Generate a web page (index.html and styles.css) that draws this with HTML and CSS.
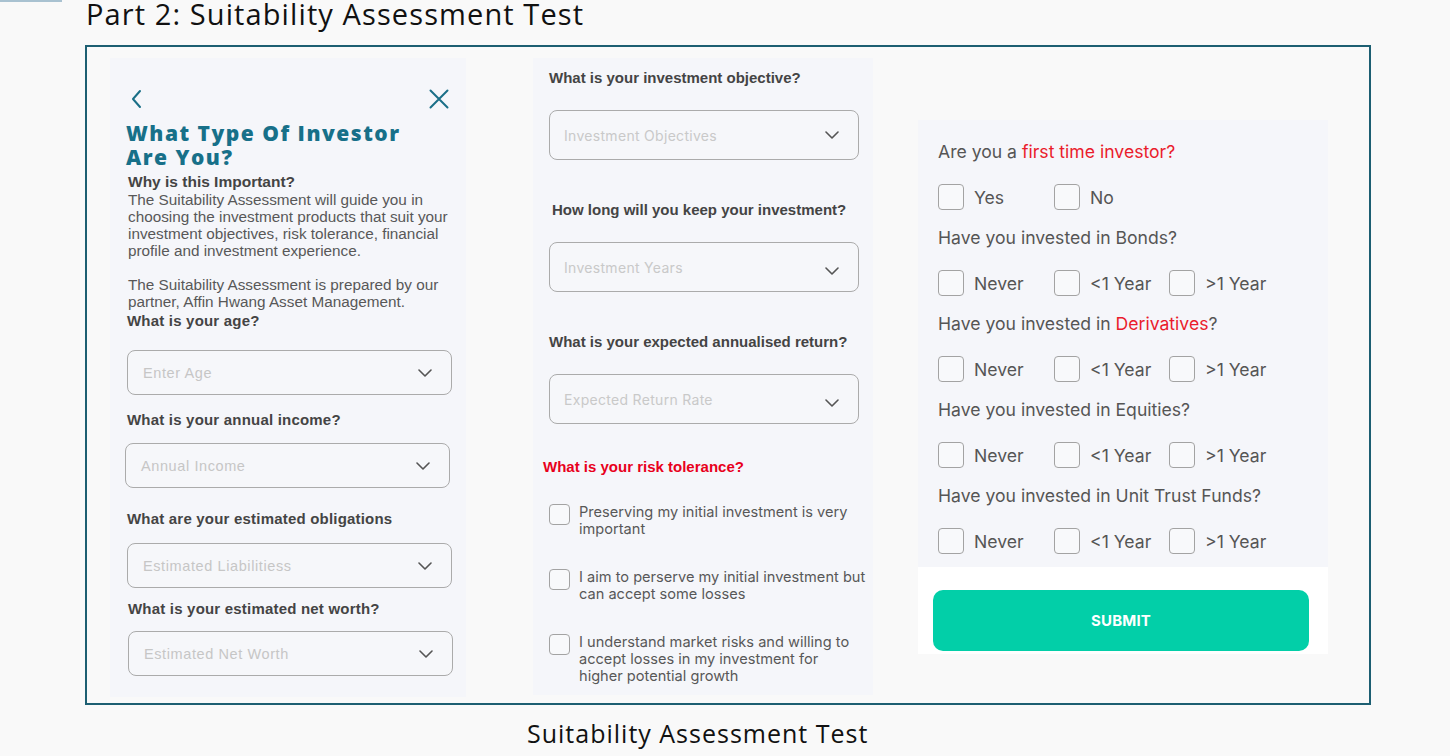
FILE: index.html
```html
<!DOCTYPE html>
<html lang="en">
<head>
<meta charset="utf-8">
<title>Part 2: Suitability Assessment Test</title>
<link rel="stylesheet" href="styles.css">
</head>
<body>
<div class="corner-bar"></div>
<h1 class="heading">Part 2: Suitability Assessment Test</h1>

<div class="frame">
  <!-- Panel 1 -->
  <section class="panel panel-profile">
    <div class="nav-row">
      <svg class="nav-icon" width="14" height="20" viewBox="0 0 14 20"><polyline points="10,2 3,10 10,18" fill="none" stroke="#1a6f87" stroke-width="2" stroke-linecap="round" stroke-linejoin="round"/></svg>
      <svg class="nav-icon" width="20" height="20" viewBox="0 0 20 20"><path d="M1.5 1.5 L18.5 18.5 M18.5 1.5 L1.5 18.5" fill="none" stroke="#1a6f87" stroke-width="2" stroke-linecap="round"/></svg>
    </div>
    <h2 class="investor-title">What Type Of Investor<br>Are You?</h2>
    <div class="why">Why is this Important?</div>
    <p class="intro">The Suitability Assessment will guide you in choosing the investment products that suit your investment objectives, risk tolerance, financial profile and investment experience.<br><br>The Suitability Assessment is prepared by our partner, Affin Hwang Asset Management.</p>

    <div class="q-left q-age">What is your age?</div>
    <div class="select select-left s-age"><span class="ph">Enter Age</span><svg class="chev" width="14" height="8" viewBox="0 0 14 8"><polyline points="1,1 7,7 13,1" fill="none" stroke="#555" stroke-width="1.6" stroke-linecap="round" stroke-linejoin="round"/></svg></div>

    <div class="q-left q-income">What is your annual income?</div>
    <div class="select select-left s-income"><span class="ph">Annual Income</span><svg class="chev" width="14" height="8" viewBox="0 0 14 8"><polyline points="1,1 7,7 13,1" fill="none" stroke="#555" stroke-width="1.6" stroke-linecap="round" stroke-linejoin="round"/></svg></div>

    <div class="q-left q-oblig">What are your estimated obligations</div>
    <div class="select select-left s-oblig"><span class="ph">Estimated Liabilitiess</span><svg class="chev" width="14" height="8" viewBox="0 0 14 8"><polyline points="1,1 7,7 13,1" fill="none" stroke="#555" stroke-width="1.6" stroke-linecap="round" stroke-linejoin="round"/></svg></div>

    <div class="q-left q-worth">What is your estimated net worth?</div>
    <div class="select select-left s-worth"><span class="ph">Estimated Net Worth</span><svg class="chev" width="14" height="8" viewBox="0 0 14 8"><polyline points="1,1 7,7 13,1" fill="none" stroke="#555" stroke-width="1.6" stroke-linecap="round" stroke-linejoin="round"/></svg></div>
  </section>

  <!-- Panel 2 -->
  <section class="panel panel-goals">
    <div class="q-mid">What is your investment objective?</div>
    <div class="select select-mid"><span class="ph ph-mid">Investment Objectives</span><svg class="chev" width="14" height="8" viewBox="0 0 14 8"><polyline points="1,1 7,7 13,1" fill="none" stroke="#555" stroke-width="1.6" stroke-linecap="round" stroke-linejoin="round"/></svg></div>

    <div class="q-mid q-shift">How long will you keep your investment?</div>
    <div class="select select-mid"><span class="ph ph-mid">Investment Years</span><svg class="chev chev-low" width="14" height="8" viewBox="0 0 14 8"><polyline points="1,1 7,7 13,1" fill="none" stroke="#555" stroke-width="1.6" stroke-linecap="round" stroke-linejoin="round"/></svg></div>

    <div class="q-mid">What is your expected annualised return?</div>
    <div class="select select-mid"><span class="ph ph-mid">Expected Return Rate</span><svg class="chev chev-low" width="14" height="8" viewBox="0 0 14 8"><polyline points="1,1 7,7 13,1" fill="none" stroke="#555" stroke-width="1.6" stroke-linecap="round" stroke-linejoin="round"/></svg></div>

    <div class="q-risk">What is your risk tolerance?</div>
    <ul class="risk-list">
      <li class="risk-item"><span class="box box-sm"></span><span>Preserving my initial investment is very important</span></li>
      <li class="risk-item"><span class="box box-sm"></span><span>I aim to perserve my initial investment but can accept some losses</span></li>
      <li class="risk-item"><span class="box box-sm"></span><span>I understand market risks and willing to accept losses in my investment for<br>higher potential growth</span></li>
    </ul>
  </section>

  <!-- Panel 3 -->
  <section class="panel panel-exp">
    <div class="exp-body">
      <div class="exp-q">Are you a <span class="red">first time investor?</span></div>
      <div class="opt-row">
        <label class="opt"><span class="box"></span>Yes</label>
        <label class="opt"><span class="box"></span>No</label>
      </div>

      <div class="exp-q">Have you invested in Bonds?</div>
      <div class="opt-row">
        <label class="opt"><span class="box"></span>Never</label>
        <label class="opt"><span class="box"></span>&lt;1 Year</label>
        <label class="opt"><span class="box"></span>&gt;1 Year</label>
      </div>

      <div class="exp-q">Have you invested in <span class="red">Derivatives</span>?</div>
      <div class="opt-row">
        <label class="opt"><span class="box"></span>Never</label>
        <label class="opt"><span class="box"></span>&lt;1 Year</label>
        <label class="opt"><span class="box"></span>&gt;1 Year</label>
      </div>

      <div class="exp-q">Have you invested in Equities?</div>
      <div class="opt-row">
        <label class="opt"><span class="box"></span>Never</label>
        <label class="opt"><span class="box"></span>&lt;1 Year</label>
        <label class="opt"><span class="box"></span>&gt;1 Year</label>
      </div>

      <div class="exp-q">Have you invested in Unit Trust Funds?</div>
      <div class="opt-row">
        <label class="opt"><span class="box"></span>Never</label>
        <label class="opt"><span class="box"></span>&lt;1 Year</label>
        <label class="opt"><span class="box"></span>&gt;1 Year</label>
      </div>
    </div>
    <div class="exp-footer">
      <button class="submit" type="button">SUBMIT</button>
    </div>
  </section>
</div>

<p class="caption">Suitability Assessment Test</p>
</body>
</html>
```

FILE: styles.css
```css
* { box-sizing: border-box; }

html, body {
  margin: 0;
  padding: 0;
  background: #f9f9f9;
}

body {
  position: relative;
  width: 1450px;
  height: 756px;
  overflow: hidden;
  font-family: "Liberation Sans", Arial, sans-serif;
  color: #222;
}

.corner-bar {
  position: absolute;
  left: 0;
  top: 0;
  width: 62px;
  height: 2px;
  background: #a9c2d1;
}

.heading {
  margin: 0 0 17px 86px;
  font-family: "Open Sans", sans-serif;
  font-weight: 500;
  font-size: 29px;
  line-height: 28px;
  color: #111;
  letter-spacing: 1.1px;
  white-space: nowrap;
}

.frame {
  margin-left: 85px;
  width: 1286px;
  height: 660px;
  border: 2px solid #1d5f72;
  display: flex;
  align-items: flex-start;
  padding: 11px 0 0 23px;
}

.panel {
  background: #f5f6fa;
  flex: none;
}

/* ---------- Panel 1 ---------- */
.panel-profile {
  width: 356px;
  height: 639px;
  padding: 31px 8px 0 16px;
  display: flex;
  flex-direction: column;
  align-items: flex-start;
}

.nav-row {
  align-self: stretch;
  display: flex;
  justify-content: space-between;
  align-items: center;
  height: 20px;
  padding-left: 4px;
  padding-right: 9px;
}

.nav-icon { display: block; }

.investor-title {
  margin: 12px 0 0 0;
  font-family: "Open Sans", sans-serif;
  font-weight: 800;
  font-size: 21px;
  line-height: 24px;
  letter-spacing: 1.5px;
  color: #177089;
}

.why {
  margin: 4px 0 0 2px;
  font-weight: 700;
  font-size: 15.5px;
  line-height: 18px;
  color: #444;
}

.intro {
  margin: 0 0 0 2px;
  font-size: 15.3px;
  line-height: 17px;
  color: #585858;
  width: 332px;
}

.q-left {
  font-weight: 700;
  font-size: 15px;
  line-height: 18px;
  letter-spacing: 0.2px;
  color: #444;
  margin-left: 1px;
}

.q-age { margin-top: 2px; }
.q-income { margin-top: 16px; margin-left: 1px; }
.q-oblig { margin-top: 22px; margin-left: 1px; }
.q-worth { margin-top: 12px; margin-left: 2px; }

.select {
  display: flex;
  align-items: center;
  justify-content: space-between;
  border: 1px solid #ababab;
  border-radius: 8px;
  background: #f6f7fa;
}

.select-left {
  width: 325px;
  height: 45px;
  padding: 0 19px 0 15px;
}

.s-age { margin-top: 20px; margin-left: 1px; }
.s-income { margin-top: 14px; margin-left: -1px; }
.s-oblig { margin-top: 15px; margin-left: 1px; }
.s-worth { margin-top: 13px; margin-left: 2px; }

.ph {
  font-family: "Liberation Sans", Arial, sans-serif;
  font-size: 14.5px;
  letter-spacing: 0.6px;
  color: #c6c6c6;
}

.chev { display: block; flex: none; }
.chev-low { margin-top: 8px; }

/* ---------- Panel 2 ---------- */
.panel-goals {
  margin-left: 67px;
  width: 340px;
  height: 637px;
  padding: 11px 0 0 16px;
}

.q-mid {
  font-weight: 700;
  font-size: 15px;
  line-height: 18px;
  color: #444;
  letter-spacing: 0;
  white-space: nowrap;
}

.q-shift { padding-left: 3px; }

.select-mid {
  width: 310px;
  height: 50px;
  padding: 0 19px 0 14px;
  margin: 23px 0 41px 0;
}

.ph-mid {
  font-family: Inter, sans-serif;
  font-size: 14px;
  letter-spacing: 0.3px;
  color: #c9c9c9;
}

.q-risk {
  margin: -7px 0 0 -6px;
  font-weight: 700;
  font-size: 15px;
  line-height: 18px;
  color: #e8001c;
}

.risk-list {
  list-style: none;
  margin: 28px 0 0 0;
  padding: 0;
  display: flex;
  flex-direction: column;
  gap: 31px;
}

.risk-item {
  display: flex;
  align-items: flex-start;
  gap: 9px;
  font-family: Inter, sans-serif;
  font-size: 14.6px;
  line-height: 17px;
  color: #585858;
  width: 324px;
}

.box {
  display: block;
  flex: none;
  width: 26px;
  height: 26px;
  border: 1.5px solid #a3a3a3;
  border-radius: 4px;
  background: #f8f9fb;
}

.box-sm {
  width: 21px;
  height: 21px;
  border-radius: 4px;
}

/* ---------- Panel 3 ---------- */
.panel-exp {
  margin-left: 45px;
  margin-top: 62px;
  width: 410px;
  background: transparent;
}

.exp-body {
  background: #f5f6fa;
  height: 447px;
  padding: 22px 0 0 20px;
}

.exp-q {
  font-family: Inter, sans-serif;
  font-size: 17.6px;
  line-height: 20px;
  color: #555;
}

.red { color: #ea1c2c; }

.opt-row {
  display: grid;
  grid-template-columns: 116px 115px auto;
  margin: 22px 0 18px 0;
  height: 26px;
}

.opt {
  display: flex;
  align-items: center;
  gap: 10px;
  font-family: Inter, sans-serif;
  font-size: 17.6px;
  color: #555;
}

.exp-footer {
  background: #ffffff;
  height: 87px;
  padding: 23px 19px 0 15px;
}

.submit {
  display: block;
  width: 100%;
  height: 61px;
  border: none;
  border-radius: 10px;
  background: #02cfa8;
  color: #fff;
  font-family: Inter, sans-serif;
  font-weight: 700;
  font-size: 15px;
  letter-spacing: 0.2px;
}

.caption {
  margin: 14px 0 0 527px;
  font-family: "Open Sans", sans-serif;
  font-weight: 500;
  font-size: 25px;
  line-height: 28px;
  letter-spacing: 1px;
  color: #111;
  white-space: nowrap;
}
```
